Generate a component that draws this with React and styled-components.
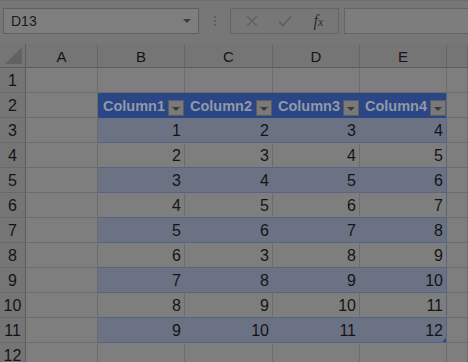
import React from 'react'
import styled, {createGlobalStyle} from "styled-components"

const GlobalStyle = createGlobalStyle`
  html, body { margin: 0; padding: 0; }
  body {
    background: #777;
    font-family: "Liberation Sans", Arial, sans-serif;
  }
`

const columns = ["A", "B", "C", "D", "E", ""]
// rows 3..11 of the table, columns B..E
const data = [
  [1, 2, 3, 4],
  [2, 3, 4, 5],
  [3, 4, 5, 6],
  [4, 5, 6, 7],
  [5, 6, 7, 8],
  [6, 3, 8, 9],
  [7, 8, 9, 10],
  [8, 9, 10, 11],
  [9, 10, 11, 12],
]

const App = () => {
  const rows = []
  for (let r = 1; r <= 12; r++) {
    const cells = []
    for (let c = 0; c < 6; c++) {
      const inTable = c >= 1 && c <= 4
      if (r === 2 && inTable) {
        cells.push(
          <HeadCell key={c}>
            <span>Column{c}</span>
            <FilterButton><Arrow/></FilterButton>
          </HeadCell>
        )
      } else if (r >= 3 && r <= 11 && inTable) {
        const last = r === 11 && c === 4
        cells.push(
          <Cell key={c} $band={r % 2 === 1} $table>
            {data[r - 3][c - 1]}
            {last && <Handle/>}
          </Cell>
        )
      } else {
        cells.push(<Cell key={c} $tableLeft={c === 5 && r >= 2 && r <= 11}/>)
      }
    }
    rows.push(
      <React.Fragment key={r}>
        <RowHead>{r}</RowHead>
        {cells}
      </React.Fragment>
    )
  }

  return (
    <Page>
      <GlobalStyle/>
      <FormulaBar>
        <NameBox>
          <span>D13</span>
          <SmallArrow/>
        </NameBox>
        <Dots>
          <i/><i/><i/>
        </Dots>
        <FxGroup>
          <FxIcon>
            <svg width="12" height="12" viewBox="0 0 12 12">
              <path d="M1 1 L11 11 M11 1 L1 11" stroke="#5f5f5f" strokeWidth="1.3" fill="none"/>
            </svg>
          </FxIcon>
          <FxIcon>
            <svg width="14" height="12" viewBox="0 0 14 12">
              <path d="M1 6.5 L5 10.5 L13 1.5" stroke="#5f5f5f" strokeWidth="1.8" fill="none"/>
            </svg>
          </FxIcon>
          <FxLabel>f<sub>x</sub></FxLabel>
        </FxGroup>
        <FormulaInput/>
      </FormulaBar>
      <Sheet>
        <Corner><Triangle/></Corner>
        {columns.map((col, i) => (
          <ColHead key={i}>{col}</ColHead>
        ))}
        {rows}
      </Sheet>
    </Page>
  )
}

const Page = styled.div`
  width: 100%;
  height: 100vh;
  overflow: hidden;
  background: #777;
`

const FormulaBar = styled.div`
  display: flex;
  align-items: center;
  height: 44px;
  padding: 0 0 3px 3px;
  box-sizing: border-box;
  border-top: 1px solid #6e6e6e;
`

const NameBox = styled.div`
  width: 196px;
  height: 26px;
  box-sizing: border-box;
  border: 1px solid #5f5f5f;
  background: #7e7e7e;
  display: flex;
  align-items: center;
  justify-content: space-between;
  padding: 0 7px 0 7px;
  font-size: 14px;
  color: #1a1a1a;
`

const SmallArrow = styled.div`
  width: 0;
  height: 0;
  border-left: 4px solid transparent;
  border-right: 4px solid transparent;
  border-top: 4px solid #3c3c3c;
`

const Dots = styled.div`
  width: 31px;
  display: flex;
  flex-direction: column;
  align-items: center;
  gap: 2px;
  i {
    width: 2px;
    height: 2px;
    background: #5e5e5e;
  }
`

const FxGroup = styled.div`
  width: 109px;
  height: 26px;
  box-sizing: border-box;
  border: 1px solid #656565;
  display: flex;
  align-items: center;
  justify-content: space-around;
  padding: 0 2px 0 4px;
`

const FxIcon = styled.div`
  width: 24px;
  display: flex;
  justify-content: center;
`

const FxLabel = styled.div`
  width: 26px;
  text-align: center;
  font-family: "Liberation Serif", "Times New Roman", serif;
  font-style: italic;
  font-size: 16px;
  color: #2e2e2e;
  sub {
    font-size: 12px;
    vertical-align: 0;
  }
`

const FormulaInput = styled.div`
  flex: 1;
  height: 26px;
  margin-left: 5px;
  box-sizing: border-box;
  border: 1px solid #656565;
  border-right: none;
  background: #7d7d7d;
`

const Sheet = styled.div`
  display: grid;
  grid-template-columns: 26px 72px 87px 88px 87px 87px 1fr;
  grid-template-rows: 24px;
  grid-auto-rows: 25px;
  font-size: 15px;
  color: #141414;
`

const Corner = styled.div`
  background: #757575;
  border-right: 1px solid #5c5c5c;
  border-bottom: 1px solid #5c5c5c;
  display: flex;
  align-items: flex-end;
  justify-content: flex-end;
  padding: 0 3px 3px 0;
`

const Triangle = styled.div`
  width: 0;
  height: 0;
  border-left: 17px solid transparent;
  border-bottom: 17px solid #626262;
`

const ColHead = styled.div`
  background: #757575;
  border-right: 1px solid #666;
  border-bottom: 1px solid #5c5c5c;
  display: flex;
  align-items: center;
  justify-content: center;
  padding-top: 1px;
`

const RowHead = styled.div`
  background: #757575;
  border-right: 1px solid #5c5c5c;
  border-bottom: 1px solid #6a6a6a;
  display: flex;
  align-items: center;
  justify-content: center;
  padding-top: 1px;
  font-size: 16px;
`

const Cell = styled.div`
  position: relative;
  background: ${(p) => (p.$band ? "#6b7284" : "#7e7e7e")};
  border-right: 1px solid ${(p) => (p.$band ? "#6b7284" : "#6c6c6c")};
  border-bottom: 1px solid ${(p) => (p.$table ? "#59647e" : "#6c6c6c")};
  border-left: ${(p) => (p.$tableLeft ? "1px solid #59647e" : "none")};
  margin-left: ${(p) => (p.$tableLeft ? "-1px" : "0")};
  display: flex;
  align-items: center;
  justify-content: flex-end;
  padding: 1px 3px 0 0;
  font-size: 16px;
`

const HeadCell = styled.div`
  background: #2a4684;
  border-bottom: 1px solid #2a4684;
  color: #9198a8;
  font-weight: bold;
  font-size: 14.5px;
  display: flex;
  align-items: center;
  justify-content: space-between;
  padding: 1px 1px 0 5px;
`

const FilterButton = styled.div`
  width: 16px;
  height: 16px;
  box-sizing: border-box;
  border: 1px solid #5c5c5c;
  background: #797979;
  margin-top: 5px;
  display: flex;
  align-items: center;
  justify-content: center;
`

const Arrow = styled.div`
  width: 0;
  height: 0;
  margin-top: 2px;
  border-left: 4px solid transparent;
  border-right: 4px solid transparent;
  border-top: 4px solid #3a3a3a;
`

const Handle = styled.div`
  position: absolute;
  right: 0;
  bottom: 0;
  width: 0;
  height: 0;
  border-left: 4px solid transparent;
  border-bottom: 4px solid #2c4784;
`

export default App
